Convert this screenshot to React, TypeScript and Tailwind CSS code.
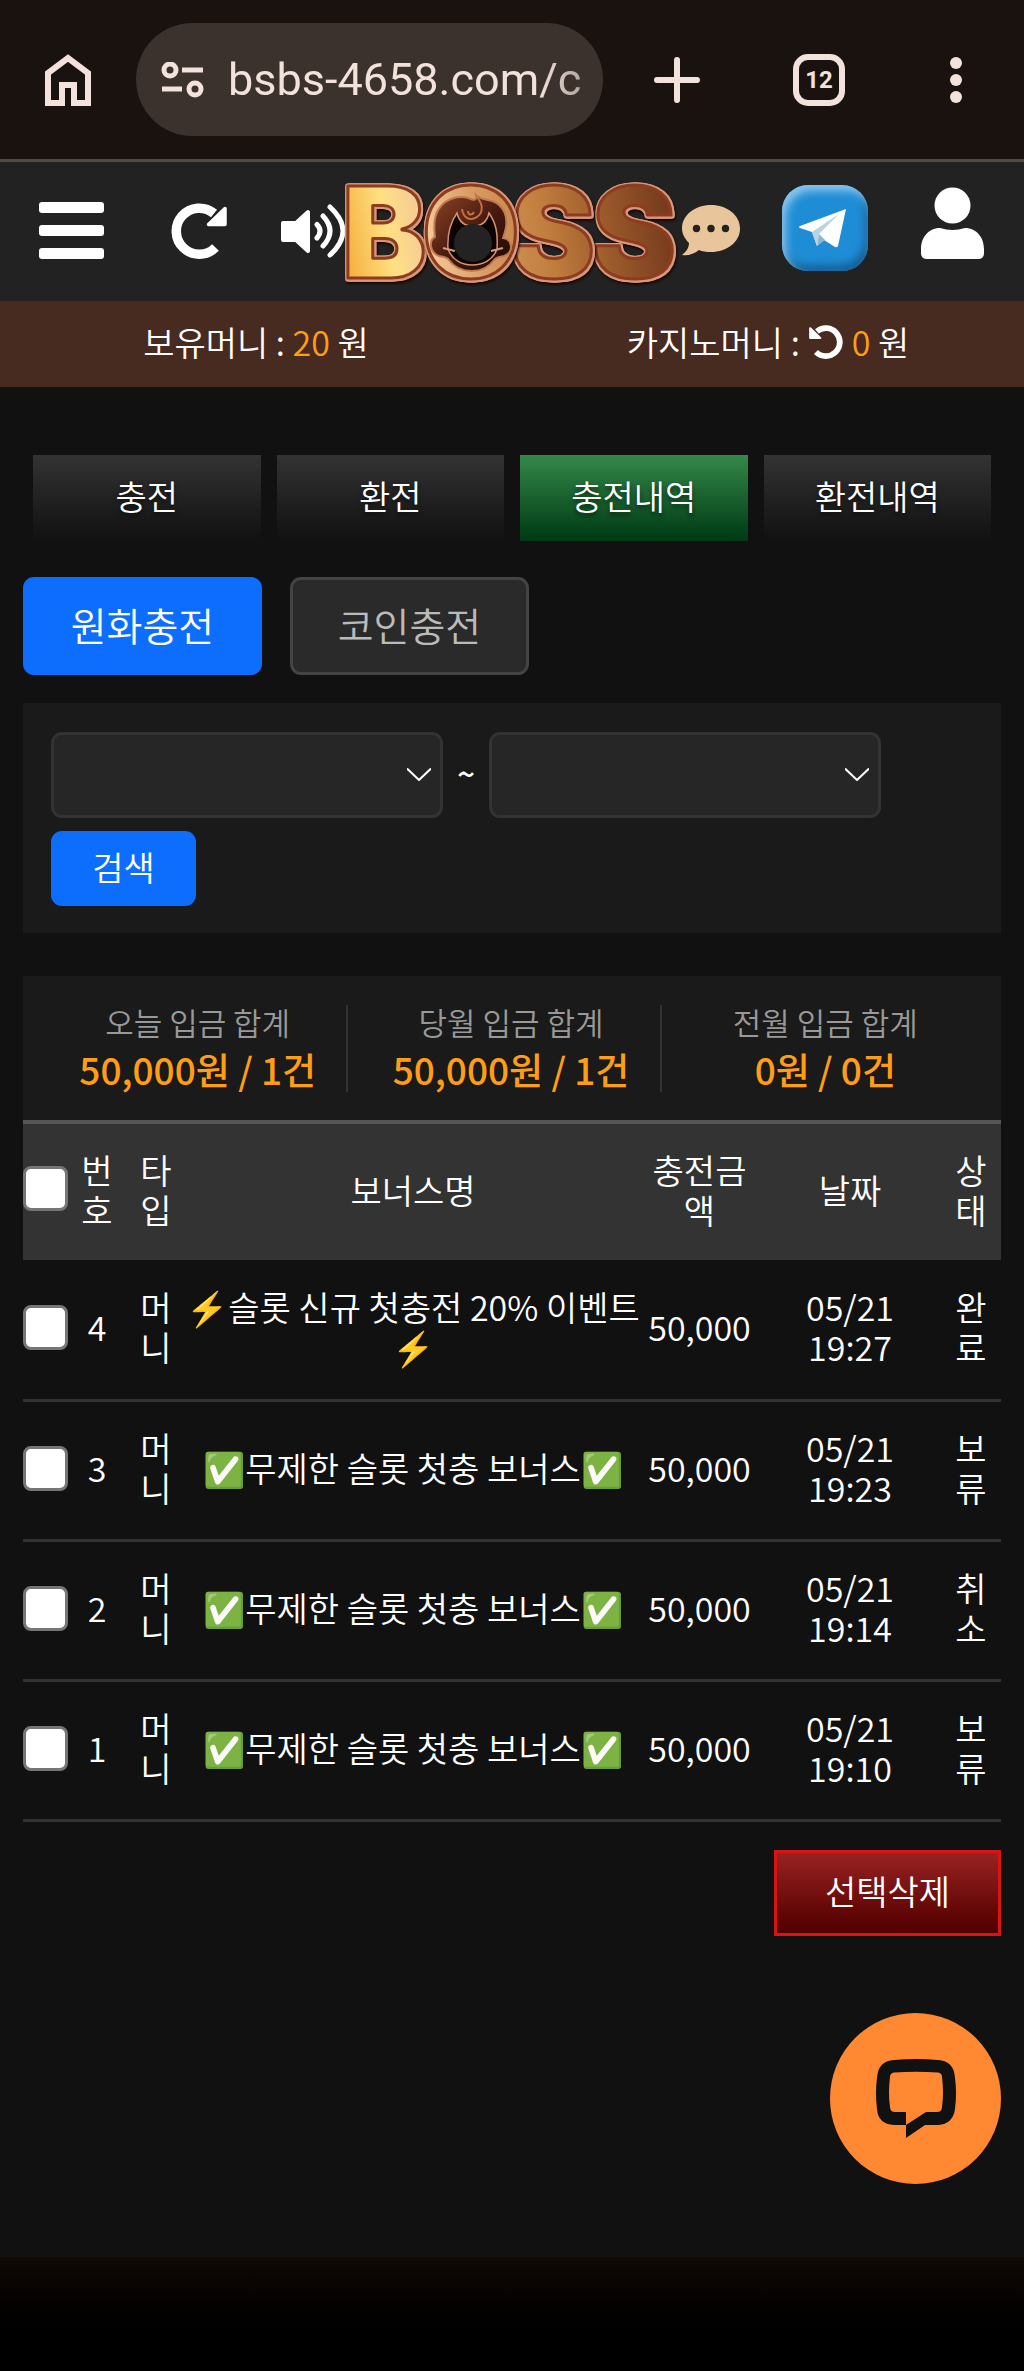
import React, { useState } from 'react';
import clsx from 'clsx';

interface Deposit {
  id: number;
  type: string;
  bonus: string;
  amount: string;
  date: string;
  status: string;
}

const deposits: Deposit[] = [
  { id: 4, type: '머니', bonus: '⚡슬롯 신규 첫충전 20% 이벤트⚡', amount: '50,000', date: '05/21 19:27', status: '완료' },
  { id: 3, type: '머니', bonus: '✅무제한 슬롯 첫충 보너스✅', amount: '50,000', date: '05/21 19:23', status: '보류' },
  { id: 2, type: '머니', bonus: '✅무제한 슬롯 첫충 보너스✅', amount: '50,000', date: '05/21 19:14', status: '취소' },
  { id: 1, type: '머니', bonus: '✅무제한 슬롯 첫충 보너스✅', amount: '50,000', date: '05/21 19:10', status: '보류' },
];

const summary = [
  { label: '오늘 입금 합계', value: '50,000원 / 1건' },
  { label: '당월 입금 합계', value: '50,000원 / 1건' },
  { label: '전월 입금 합계', value: '0원 / 0건' },
];

const tabs = ['충전', '환전', '충전내역', '환전내역'];

const RotateIcon: React.FC<{ className?: string }> = ({ className }) => (
  <svg viewBox="0 0 56 56" className={className} fill="none" aria-hidden="true">
    <path d="M44.500 44.500A23 23 0 1 1 43 10.500" stroke="white" strokeWidth="9.500" />
    <path d="M54 5.500V21.500H37.500Z" fill="white" stroke="white" strokeWidth="3.500" strokeLinejoin="round" />
  </svg>
);

// copper rim round each letter plus the dark extrusion under it
const rim =
  '[filter:drop-shadow(2px_0_0_#d6977b)_drop-shadow(-1px_0_0_#d6977b)_drop-shadow(0_2px_0_#d6977b)_drop-shadow(0_-1px_0_#d6977b)_drop-shadow(1px_2px_1px_#1a0603)]';

const BossLogo = () => (
  <svg viewBox="0 0 334 104" className="w-[334px] h-[104px] shrink-0 overflow-visible" role="img" aria-label="BOSS">
    <defs>
      <linearGradient id="gold" gradientUnits="userSpaceOnUse" x1="0" y1="80" x2="334" y2="20">
        <stop offset="0" stopColor="#f5ae3c" />
        <stop offset="0.14" stopColor="#ffe183" />
        <stop offset="0.25" stopColor="#f3c898" />
        <stop offset="0.4" stopColor="#d99c63" />
        <stop offset="0.6" stopColor="#c07d3d" />
        <stop offset="0.78" stopColor="#9a592b" />
        <stop offset="1" stopColor="#6f3519" />
      </linearGradient>
      <linearGradient id="hair" x1="0" y1="0" x2="1" y2="1">
        <stop offset="0" stopColor="#8d4527" />
        <stop offset="0.5" stopColor="#4a1a0e" />
        <stop offset="1" stopColor="#1c0805" />
      </linearGradient>
    </defs>
    <g
      fontFamily="Inter, sans-serif"
      fontWeight="900"
      fontSize="126"
      fill="url(#gold)"
      stroke="#8d3c1f"
      strokeWidth="3"
      strokeLinejoin="round"
    >
      <text x="247" y="99" className={rim}>S</text>
      <text x="166" y="99" className={rim}>S</text>
      <text x="-3" y="99" className={rim}>B</text>
      <text x="77" y="99" className={rim}>O</text>
    </g>
    {/* face inside the O */}
    <circle cx="127" cy="54" r="39" fill="url(#gold)" />
    <path
      d="M90 58C88 42 90 32 99 24C107 18 118 16 126 20C130 22 132 20 131 16C138 23 148 19 154 26C163 34 163 46 158 59C168 60 169 74 159 77C154 78 151 78 149 81C144 88 136 92 127 92C117 92 109 88 104 81C102 78 98 78 94 77C84 73 84 61 90 58Z"
      fill="url(#hair)" stroke="#c07a50" strokeWidth="2"
    />
    <path
      d="M112 34C105 44 102 54 103 70C107 81 117 86 127 86C138 86 148 81 152 70C153 54 151 44 144 34C142 43 137 47 128 47C120 47 114 43 112 34Z"
      fill="#0c0403" stroke="#d39370" strokeWidth="1.500"
    />
    <circle cx="128" cy="64" r="19" fill="#232323" />
    <path d="M98 69L110 72M158 69L146 72" stroke="#d59a77" strokeWidth="2" />
    <path d="M117 30C118 38 124 42 130 39C137 36 140 28 132 18M129 33C127 37 123 36 123 32" fill="none" stroke="#bd7247" strokeWidth="2" />
  </svg>
);

const BrowserBar = () => (
  <div className="h-[162px] bg-[#1a120e] border-b-[3px] border-[#544842] flex items-center text-[#f2e2db]">
    <button aria-label="홈" className="ml-[45px] shrink-0">
      <svg viewBox="0 0 46 52" className="w-[46px] h-[52px]" fill="none" stroke="currentColor" strokeWidth="6">
        <path d="M3 49V19L23 4L43 19V49H29V31H17V49Z" />
      </svg>
    </button>
    <div className="ml-[45px] w-[467px] h-[113px] shrink-0 rounded-full bg-[#3b312d] flex items-center pl-[25px] pr-[22px] gap-[24px]">
      <svg viewBox="0 0 43 36" className="w-[43px] h-[36px] shrink-0" fill="none" stroke="currentColor" strokeWidth="5">
        <circle cx="9" cy="8" r="6" />
        <path d="M21 8H42M1 27H21" />
        <circle cx="34" cy="27" r="6" />
      </svg>
      <input
        aria-label="주소"
        defaultValue="bsbs-4658.com/c"
        className="w-full min-w-0 bg-transparent outline-none font-[Roboto,sans-serif] font-normal text-[45px] leading-[56px] text-[#f2e2db] [mask-image:linear-gradient(to_right,black_88%,#000a)]"
      />
    </div>
    <button aria-label="새 탭" className="ml-[51px] shrink-0">
      <svg viewBox="0 0 46 46" className="size-[46px]" stroke="currentColor" strokeWidth="6" strokeLinecap="round">
        <path d="M23 3V43M3 23H43" />
      </svg>
    </button>
    <button className="ml-[93px] size-[52px] shrink-0 rounded-[15px] border-[6px] border-current font-[Roboto,sans-serif] font-bold text-[24px] leading-[40px]">12</button>
    <button aria-label="메뉴" className="ml-[105px] shrink-0">
      <svg viewBox="0 0 12 46" className="w-[12px] h-[46px]" fill="currentColor">
        <circle cx="6" cy="6" r="6" />
        <circle cx="6" cy="23" r="6" />
        <circle cx="6" cy="40" r="6" />
      </svg>
    </button>
  </div>
);

const Header = () => (
  <header className="h-[139px] bg-[#222] flex items-center pb-[2px]">
    <button aria-label="전체 메뉴" className="ml-[39px] shrink-0 flex flex-col gap-[12px]">
      <span className="w-[65px] h-[11px] rounded-[3px] bg-white" />
      <span className="w-[65px] h-[11px] rounded-[3px] bg-white" />
      <span className="w-[65px] h-[11px] rounded-[3px] bg-white" />
    </button>
    <button aria-label="새로고침" className="ml-[67px] shrink-0"><RotateIcon className="size-[56px]" /></button>
    <button aria-label="소리" className="ml-[54px] shrink-0">
      <svg viewBox="0 0 64 54" className="w-[64px] h-[54px]" fill="none" stroke="white" strokeWidth="5" strokeLinecap="round">
        <path d="M2 19H15L27 8V47L15 36H2Z" fill="white" strokeWidth="4" strokeLinejoin="round" />
        <path d="M36 20.500Q42 27 36 34M42 12Q56 27 42 42M49 3Q75 27 49 51" />
      </svg>
    </button>
    <a href="#home" className="shrink-0"><BossLogo /></a>
    <button aria-label="쪽지" className="ml-[3px] shrink-0">
      <svg viewBox="0 0 58 52" className="w-[58px] h-[52px]" fill="#e8c59a">
        <path d="M29 0C45 0 58 10 58 23.500S45 47 29 47C24 47 20 46.500 17 45C12 49 6 51 0 50C4 47 7 43 7 38C3 34 0 29 0 23.500C0 10 13 0 29 0Z" />
        <g fill="#222">
          <circle cx="14.500" cy="23.500" r="3.700" />
          <circle cx="29" cy="23.500" r="3.700" />
          <circle cx="43.500" cy="23.500" r="3.700" />
        </g>
      </svg>
    </button>
    <a href="#telegram" aria-label="텔레그램" className="ml-[42px] mb-[6px] size-[86px] shrink-0 rounded-[26px] bg-[#1f8dd6] shadow-[inset_4px_6px_9px_#8cc5ec,inset_-3px_-6px_9px_#155f95]">
      <svg viewBox="0 0 86 86" className="size-[86px]">
        <path d="M18 41L64 24L56 61Q55 63 53 62L42 55L35 61L30 47L18 43Q16 42 18 41Z" fill="white" />
        <path d="M30 47L57 29L37 49L35 61Z" fill="#b9d2e4" />
        <path d="M37 49L43 55L35 61Z" fill="#8fb4cf" />
      </svg>
    </a>
    <button aria-label="내 정보" className="ml-[53px] mb-[14px] shrink-0">
      <svg viewBox="0 0 63 73" className="w-[63px] h-[73px]" fill="white">
        <circle cx="31.500" cy="18.500" r="18" />
        <path d="M19 41Q31.500 45 44 41C56 41 63 51 63 62V66Q63 72 57 72H6Q0 72 0 66V62C0 51 7 41 19 41Z" />
      </svg>
    </button>
  </header>
);

const DateSelect: React.FC<{ label: string }> = ({ label }) => (
  <div className="relative w-[392px]">
    <select aria-label={label} className="block w-full h-[86px] appearance-none rounded-[11px] border-[3px] border-[#333] bg-[#262626] pl-5 pr-14 text-white">
      <option value=""></option>
    </select>
    <svg viewBox="0 0 24 13" className="absolute right-[12px] top-[36px] w-[24px] h-[13px] pointer-events-none" fill="none" stroke="white" strokeWidth="2">
      <path d="M0 0.500L12 12L24 0.500" />
    </svg>
  </div>
);

const Check: React.FC<{ label: string; checked: boolean; onChange: () => void }> = ({ label, checked, onChange }) => (
  <input
    type="checkbox"
    aria-label={label}
    checked={checked}
    onChange={onChange}
    className="block size-[45px] appearance-none rounded-[8px] border-[3px] border-[#767676] bg-white checked:bg-[#0d6efd]"
  />
);

const App = () => {
  const [tab, setTab] = useState('충전내역');
  const [kind, setKind] = useState('원화충전');
  const [selected, setSelected] = useState<number[]>([]);

  const toggle = (id: number) =>
    setSelected((prev) => (prev.includes(id) ? prev.filter((x) => x !== id) : [...prev, id]));

  const allSelected = selected.length === deposits.length;

  return (
    <div className="bg-[#111] text-white font-[350] text-[34px] leading-[40px] font-['Noto_Sans_CJK_KR',sans-serif]">
      <BrowserBar />
      <Header />

      {/* Balance */}
      <div className="h-[86px] pb-[4px] bg-[#472b20] grid grid-cols-2 items-center text-center">
        <p>보유머니 : <span className="text-[#ff9e16]">20</span> 원</p>
        <p className="flex items-center justify-center gap-[9px]">
          <span>카지노머니 :</span>
          <button aria-label="카지노머니 새로고침"><RotateIcon className="size-[34px] -scale-x-100" /></button>
          <span><span className="text-[#ff9e16]">0</span> 원</span>
        </p>
      </div>

      <main className="px-[23px]">
        <nav className="mt-[68px] px-[10px] grid grid-cols-4 gap-[16px]">
          {tabs.map((t) => (
            <button
              key={t}
              onClick={() => setTab(t)}
              className={clsx(
                'h-[86px] pb-[4px] bg-linear-to-b [text-shadow:0_3px_4px_#0008]',
                t === tab ? 'from-[#34894a] to-[#003a14]' : 'from-[#333] to-[#111]',
              )}
            >
              {t}
            </button>
          ))}
        </nav>

        <div className="mt-[36px] flex gap-[28px]">
          {['원화충전', '코인충전'].map((k) => (
            <button
              key={k}
              onClick={() => setKind(k)}
              className={clsx(
                'w-[239px] h-[98px] pb-[4px] rounded-[11px] border-[3px] text-[39px] leading-[48px]',
                k === kind ? 'bg-[#0d6efd] border-[#0d6efd] text-white' : 'bg-[#2a2a2a] border-[#444] text-[#bbb]',
              )}
            >
              {k}
            </button>
          ))}
        </div>

        {/* Period search */}
        <form onSubmit={(e) => e.preventDefault()} className="mt-[28px] bg-[#1a1a1a] px-[28px] pt-[29px] pb-[27px]">
          <div className="flex items-center">
            <DateSelect label="시작일" />
            <span className="w-[46px] pb-[4px] text-center text-[31px] font-medium">~</span>
            <DateSelect label="종료일" />
          </div>
          <button type="submit" className="mt-[13px] w-[145px] h-[75px] pb-[4px] rounded-[11px] bg-[#0d6efd]">검색</button>
        </form>

        {/* Totals */}
        <div className="mt-[43px] h-[144px] bg-[#1a1a1a] px-[26px] pt-[29px] grid grid-cols-3 gap-[14px]">
          {summary.map((s, i) => (
            <div key={s.label} className={clsx('h-[87px] text-center whitespace-nowrap', i < 2 && 'border-r-2 border-[#333]')}>
              <p className="text-[31px] leading-[34px] text-[#999]">{s.label}</p>
              <p className="text-[37px] leading-[60px] font-medium text-[#ff9e16]">{s.value}</p>
            </div>
          ))}
        </div>

        <table className="w-full table-fixed border-collapse text-center break-all">
          <colgroup>
            <col className="w-[45px]" />
            <col className="w-[58px]" />
            <col className="w-[60px]" />
            <col />
            <col className="w-[119px]" />
            <col className="w-[182px]" />
            <col className="w-[60px]" />
          </colgroup>
          <thead>
            <tr className="h-[138px] bg-[#333] border-t-[4px] border-[#555]">
              <th className="pb-[8px]"><Check label="전체 선택" checked={allSelected} onChange={() => setSelected(allSelected ? [] : deposits.map((d) => d.id))} /></th>
              {['번호', '타입', '보너스명', '충전금액', '날짜', '상태'].map((h) => (
                <th key={h} className="px-[4px] pb-[4px] font-[350]">{h}</th>
              ))}
            </tr>
          </thead>
          <tbody>
            {deposits.map((d) => (
              <tr key={d.id} className="h-[140px] border-b-[3px] border-[#333]">
                <td className="pb-[4px]"><Check label={`${d.id}번 선택`} checked={selected.includes(d.id)} onChange={() => toggle(d.id)} /></td>
                <td className="pb-[4px]">{d.id}</td>
                <td className="px-[4px] pb-[4px]">{d.type}</td>
                <td className="pb-[4px]">{d.bonus}</td>
                <td className="pb-[4px]">{d.amount}</td>
                <td className="px-[28px] pb-[4px] break-keep">{d.date}</td>
                <td className="px-[4px] pb-[4px]">{d.status}</td>
              </tr>
            ))}
          </tbody>
        </table>

        <div className="mt-[28px] flex justify-end">
          <button className="w-[227px] h-[86px] pb-[4px] border-[3px] border-[#d91414] bg-linear-to-b from-[#992222] to-[#500000]">선택삭제</button>
        </div>

        <div className="mt-[77px] pb-[73px] flex justify-end">
          <button aria-label="채팅 상담" className="size-[171px] rounded-full bg-[#ff8833] flex items-center justify-center">
            <svg viewBox="0 0 80 79" className="w-[80px] h-[79px]" fill="#111">
              <path
                fillRule="evenodd"
                d="M18 1Q40 -1 62 1Q78 2 79 19Q81 34 79 50Q77 65 62 66H49L30 79V66H18Q2 65 1 50Q-1 34 1 19Q2 2 18 1ZM18 13.500Q40 12 62 13.500Q66 14 66 18Q68 34 66 48Q66 53 61 53H50L30 66V53H19Q14 53 14 48Q12 34 14 18Q14 14 18 13.500Z"
              />
            </svg>
          </button>
        </div>
      </main>

      <footer className="h-[115px] bg-linear-to-b from-[#110a05] to-black" />
    </div>
  );
};

export default App;
